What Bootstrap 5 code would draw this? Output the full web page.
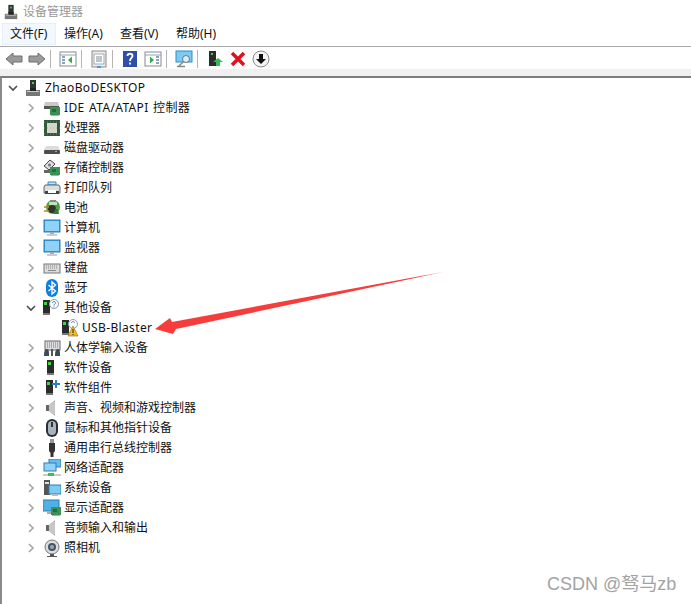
<!DOCTYPE html>
<html lang="zh-CN">
<head>
    <meta charset="UTF-8">
    <title>设备管理器</title>
    <link rel="stylesheet" href="https://cdn.jsdelivr.net/npm/bootstrap@5.3.3/dist/css/bootstrap.min.css">
    <style>
        html, body { height: 100%; overflow: hidden; }
        body { font-family: "Noto Sans", "Noto Sans CJK SC", sans-serif; font-size: 12px; line-height: 20px; color: #111; background: #fff; position: relative; }
        .title-bar { height: 23px; flex: none; padding-left: 3px; gap: 4px; color: #999; }
        .title-bar svg { width: 16px; height: 16px; }
        .menu-bar { height: 23px; flex: none; padding-left: 2px; }
        .menu-item { width: 56px; height: 22px; padding-left: 7px; line-height: 20px; border: 1px solid transparent; }
        .menu-item.hot { width: 54px; background: #f2f8fe; border-color: #e3effa; }
        .tool-bar { height: 23px; flex: none; padding-left: 2px; padding-top: 1px; border-top: 1px solid #a9a9a9; }
        .tool-btn { width: 23px; height: 22px; }
        .tool-btn svg { width: 18px; height: 18px; }
        .tool-sep { width: 1px; height: 18px; margin: 2px 5px 0 2px; background: #b5b5b5; }
        .band { height: 7px; flex: none; background: #f0f0f0; }
        .tree-pane { border-top: 2px solid #7d7d7d; border-left: 2px solid #8a8a8a; }
        .tree-row { height: 20px; }
        .lvl-0 { padding-left: 5px; }
        .lvl-1 { padding-left: 23px; }
        .lvl-2 { padding-left: 59px; }
        .chev { width: 12px; height: 12px; margin-right: 6px; flex: none; }
        .dev { width: 18px; height: 18px; margin-right: 3px; flex: none; }
        .lvl-0 .chev { margin-right: 5px; }
        .latin { letter-spacing: .35px; word-spacing: 1px; }
        .red-arrow { position: absolute; left: 150px; top: 265px; width: 302px; height: 75px; }
        .watermark { position: absolute; left: 547px; top: 574px; font-family: "Liberation Sans", "Noto Sans CJK SC", sans-serif; font-size: 18px; color: #a3a3a3; }
    </style>
</head>
<body>

    <svg width="0" height="0" class="position-absolute">
        <defs>
            <g id="tower"><rect x="3" y="1" width="7" height="15" fill="#2b2b2b"/><rect x="4" y="3" width="3" height="3" fill="#3fd34a"/><rect x="3" y="14" width="7" height="2" fill="#777"/></g>
            <symbol id="i-mgr" viewBox="0 0 18 18"><rect x="6" y="1" width="6" height="10" fill="#333"/><rect x="8" y="3" width="2" height="2" fill="#46d24f"/><path d="M2 11h14v6H2z" fill="#777"/><path d="M3 12h12v1H3z" fill="#ccc"/><rect x="6" y="9" width="6" height="3" fill="#222"/></symbol>
            <symbol id="i-ide" viewBox="0 0 18 18"><path d="M2 3h13l1 4H1z" fill="#c9c9c9"/><path d="M1 7h15v3H1z" fill="#555"/><rect x="7" y="8" width="10" height="8" fill="#3d8f55"/><rect x="9" y="10" width="4" height="3" fill="#173"/><path d="M8 16h8v1H8z" fill="#e3a92c"/></symbol>
            <symbol id="i-cpu" viewBox="0 0 18 18"><rect x="1" y="1" width="16" height="16" fill="#2f5a3c"/><rect x="4" y="4" width="10" height="10" fill="#d6d6d0"/><path d="M1 3h16M1 9h16M1 15h16" stroke="#b6a54a" stroke-width=".6" stroke-dasharray="1 2"/></symbol>
            <symbol id="i-disk" viewBox="0 0 18 18"><path d="M3 7h12l2 4H1z" fill="#dcdcdc"/><rect x="1" y="11" width="16" height="4" rx="1" fill="#4d4d4d"/><rect x="12" y="12" width="2" height="1" fill="#4de35a"/></symbol>
            <symbol id="i-store" viewBox="0 0 18 18"><path d="M7 1l5 4-6 6-5-4z" fill="#ddd" stroke="#444"/><circle cx="6.500" cy="6" r="1.500" fill="#777"/><path d="M1 11h8v3H1z" fill="#666"/><rect x="7" y="8" width="10" height="8" fill="#3d8f55"/><rect x="9" y="10" width="4" height="3" fill="#173"/><path d="M8 16h8v1H8z" fill="#e3a92c"/></symbol>
            <symbol id="i-print" viewBox="0 0 18 18"><path d="M5 3h8v3H5z" fill="#bfe2f5" stroke="#2a8fc0"/><path d="M2 6h14l1 2v6H1V8z" fill="#dedede" stroke="#666"/><path d="M2 12h14v3H2z" fill="#444"/><path d="M5 11h8v3H5z" fill="#fff"/></symbol>
            <symbol id="i-batt" viewBox="0 0 18 18"><circle cx="10" cy="8" r="7" fill="#4f9e4b"/><path d="M6 3h8v3H6z" fill="#bfe3b2"/><path d="M7 1h6v2H7z" fill="#888"/><circle cx="9" cy="10" r="4" fill="#333"/><path d="M1 8h5M1 12h5" stroke="#b08a2a" stroke-width="1.500"/><path d="M12 10h3l1 5h-5z" fill="#2f7f33"/></symbol>
            <symbol id="i-pc" viewBox="0 0 18 18"><rect x="1" y="1" width="16" height="12" fill="#36a0de" stroke="#2a7fb8"/><rect x="2" y="2" width="14" height="10" fill="#8fd2f6"/><path d="M7 13h4v2H7z" fill="#aaa"/><path d="M4 15h10v2H4z" fill="#ccc"/></symbol>
            <symbol id="i-kbd" viewBox="0 0 18 18"><rect x="1" y="5" width="16" height="9" fill="#dcdcdc" stroke="#777"/><path d="M3 7h12M3 9h12" stroke="#888" stroke-dasharray="1 1"/><path d="M5 11.500h8" stroke="#888"/></symbol>
            <symbol id="i-bt" viewBox="0 0 18 18"><rect x="3" y="0" width="12" height="18" rx="6" fill="#0f7fdc"/><path d="M5.500 6l7 6-3.500 3V3l3.500 3-7 6" fill="none" stroke="#fff" stroke-width="1.300"/></symbol>
            <symbol id="i-other" viewBox="0 0 18 18"><use href="#tower" x="-3"/><circle cx="11" cy="5" r="4.500" fill="#fff" stroke="#8a9fb5"/><path d="M9.500 4c0-2 3-2 3 0 0 1-1.500 1-1.500 2.500M11 7.500v1" fill="none" stroke="#4a77a8"/></symbol>
            <symbol id="i-warn" viewBox="0 0 18 18"><use href="#tower" x="-2"/><circle cx="12" cy="5" r="4.500" fill="#fff" stroke="#8a9fb5"/><path d="M10.500 4c0-2 3-2 3 0" fill="none" stroke="#4a77a8"/><path d="M12 7l5 10H7z" fill="#f5bd20" stroke="#8a6a10" stroke-width=".6"/><path d="M12 10v4M12 15v1" stroke="#222"/></symbol>
            <symbol id="i-hid" viewBox="0 0 18 18"><rect x="2" y="2" width="15" height="9" fill="#ddd" stroke="#666"/><path d="M4 4h11M4 6h11M4 8h11" stroke="#777" stroke-dasharray="1 1"/><path d="M1 17c0-5 1-7 3-7s2 3 2 7z" fill="#3b4a5a"/><path d="M12 17c0-5 1-7 3-7s2 3 2 7z" fill="#3b4a5a"/><rect x="8" y="10" width="2" height="7" fill="#555"/></symbol>
            <symbol id="i-soft" viewBox="0 0 18 18"><use href="#tower" x="1"/></symbol>
            <symbol id="i-comp" viewBox="0 0 18 18"><use href="#tower" x="0"/><path d="M12 1h2v3h3v2h-3v3h-2V6H9V4h3z" fill="#2f7fc8"/></symbol>
            <symbol id="i-snd" viewBox="0 0 18 18"><path d="M3 6h3l6-5v16l-6-5H3z" fill="#9a9a9a"/><path d="M6 6l6-5v16l-6-5z" fill="#c7c7c7"/><path d="M3 6h3v6H3z" fill="#666"/></symbol>
            <symbol id="i-mouse" viewBox="0 0 18 18"><rect x="3" y="0" width="12" height="18" rx="6" fill="#26303a"/><rect x="5" y="2" width="8" height="14" rx="4" fill="#a9b4be"/><rect x="8" y="3" width="2" height="5" fill="#333"/></symbol>
            <symbol id="i-usb" viewBox="0 0 18 18"><rect x="7" y="0" width="4" height="4" fill="#999"/><path d="M6 4h6v8l-1.500 2v4h-3v-4L6 12z" fill="#333"/></symbol>
            <symbol id="i-net" viewBox="0 0 18 18"><rect x="6" y="0" width="12" height="8" fill="#66bcec" stroke="#2a7fb8"/><rect x="1" y="4" width="12" height="8" fill="#8fd2f6" stroke="#2a7fb8"/><path d="M0 15h18v2H0z" fill="#ccc"/><path d="M5 14h6v3H5z" fill="#3fbf4a"/></symbol>
            <symbol id="i-sys" viewBox="0 0 18 18"><rect x="1" y="1" width="6" height="15" fill="#555"/><rect x="2" y="3" width="4" height="2" fill="#cfe4f3"/><rect x="6" y="6" width="12" height="9" fill="#7ccbf3" stroke="#2a7fb8"/><path d="M9 15h6v2H9z" fill="#bbb"/></symbol>
            <symbol id="i-disp" viewBox="0 0 18 18"><rect x="0" y="1" width="16" height="11" fill="#4fb0e6" stroke="#2a7fb8"/><path d="M4 12h6v3H4z" fill="#aaa"/><rect x="8" y="8" width="10" height="8" fill="#3d8f55"/><rect x="10" y="10" width="4" height="3" fill="#173"/><path d="M9 16h8v1H9z" fill="#e3a92c"/></symbol>
            <symbol id="i-cam" viewBox="0 0 18 18"><circle cx="9" cy="8" r="7" fill="#ddd" stroke="#777"/><circle cx="9" cy="8" r="4" fill="#456"/><circle cx="9" cy="8" r="2" fill="#9ab"/><path d="M7 15h4v2H7zM4 17h10v1H4z" fill="#555"/></symbol>
            <symbol id="c-right" viewBox="0 0 12 12"><path d="M4 2l4 4-4 4" fill="none" stroke="#a6a6a6" stroke-width="1.600"/></symbol>
            <symbol id="c-down" viewBox="0 0 12 12"><path d="M2 4l4 4 4-4" fill="none" stroke="#4d4d4d" stroke-width="1.600"/></symbol>
        </defs>
    </svg>

    <div class="d-flex flex-column h-100">
        <div class="title-bar d-flex align-items-center">
            <svg><use href="#i-mgr"/></svg>
            <span>设备管理器</span>
        </div>

        <div class="menu-bar d-flex">
            <div class="menu-item hot">文件(F)</div>
            <div class="menu-item">操作(A)</div>
            <div class="menu-item">查看(V)</div>
            <div class="menu-item">帮助(H)</div>
        </div>

        <div class="tool-bar d-flex align-items-start">
            <div class="tool-btn d-flex align-items-center justify-content-center"><svg viewBox="0 0 18 18"><path d="M1 9l7-6v3h9v6H8v3z" fill="#9a9a9a" stroke="#6f6f6f"/></svg></div>
            <div class="tool-btn d-flex align-items-center justify-content-center"><svg viewBox="0 0 18 18"><path d="M17 9l-7-6v3H1v6h9v3z" fill="#9a9a9a" stroke="#6f6f6f"/></svg></div>
            <div class="tool-sep"></div>
            <div class="tool-btn d-flex align-items-center justify-content-center"><svg viewBox="0 0 18 18"><rect x="1" y="2" width="16" height="14" fill="#fff" stroke="#8a8a8a"/><path d="M1 5h16" stroke="#8ab"/><path d="M3 7h3M3 10h3M3 13h3" stroke="#68a" stroke-width="1.500"/><path d="M13 6.500v7L9 10z" fill="#2fae4f"/></svg></div>
            <div class="tool-sep"></div>
            <div class="tool-btn d-flex align-items-center justify-content-center"><svg viewBox="0 0 18 18"><rect x="2" y="1" width="14" height="16" fill="#eee" stroke="#8a8a8a"/><rect x="4" y="4" width="10" height="10" fill="#fff" stroke="#aaa"/><path d="M6 7h6M6 9h6M6 11h6" stroke="#7a8fa5"/><path d="M7 17h4" stroke="#3aa0e0" stroke-width="2"/></svg></div>
            <div class="tool-sep"></div>
            <div class="tool-btn d-flex align-items-center justify-content-center"><svg viewBox="0 0 18 18"><rect x="2" y="1" width="14" height="16" fill="#2d4fa8"/><path d="M6.500 6c0-3 5-3 5 0 0 2-2.500 2-2.500 5M9 12.500v2" fill="none" stroke="#fff" stroke-width="1.800"/></svg></div>
            <div class="tool-btn d-flex align-items-center justify-content-center"><svg viewBox="0 0 18 18"><rect x="1" y="2" width="16" height="14" fill="#fff" stroke="#8a8a8a"/><path d="M1 5h16" stroke="#8ab"/><path d="M12 7h3M12 10h3M12 13h3" stroke="#68a" stroke-width="1.500"/><path d="M6 6.500v7L10 10z" fill="#2fae4f"/></svg></div>
            <div class="tool-sep"></div>
            <div class="tool-btn d-flex align-items-center justify-content-center"><svg viewBox="0 0 18 18"><rect x="1" y="1" width="16" height="11" fill="#7ccbf3" stroke="#2a8fd0"/><circle cx="11" cy="9" r="3.500" fill="#d8eefa" stroke="#777"/><path d="M8.500 11.500L4 16M2 16.500h8" stroke="#888" stroke-width="1.500"/></svg></div>
            <div class="tool-sep"></div>
            <div class="tool-btn d-flex align-items-center justify-content-center"><svg viewBox="0 0 18 18"><rect x="3" y="1" width="7" height="15" fill="#2b2b2b"/><rect x="5" y="3" width="2" height="2" fill="#46d24f"/><path d="M12 8l5 4h-3v4h-4v-4H7z" fill="#2fbf4f"/></svg></div>
            <div class="tool-btn d-flex align-items-center justify-content-center"><svg viewBox="0 0 18 18"><path d="M3 3l12 12M15 3L3 15" stroke="#e0101c" stroke-width="3.500"/></svg></div>
            <div class="tool-btn d-flex align-items-center justify-content-center"><svg viewBox="0 0 18 18"><circle cx="9" cy="9" r="8" fill="#f4f4f4" stroke="#888"/><path d="M7 4h4v5h3l-5 5-5-5h3z" fill="#111"/></svg></div>
        </div>

        <div class="band"></div>

        <div class="tree-pane flex-grow-1">
            <div class="tree-row lvl-0 d-flex align-items-center"><svg class="chev"><use href="#c-down"/></svg><svg class="dev"><use href="#i-mgr"/></svg><span class="latin">ZhaoBoDESKTOP</span></div>
            <div class="tree-row lvl-1 d-flex align-items-center"><svg class="chev"><use href="#c-right"/></svg><svg class="dev"><use href="#i-ide"/></svg><span class="latin">IDE ATA/ATAPI 控制器</span></div>
            <div class="tree-row lvl-1 d-flex align-items-center"><svg class="chev"><use href="#c-right"/></svg><svg class="dev"><use href="#i-cpu"/></svg>处理器</div>
            <div class="tree-row lvl-1 d-flex align-items-center"><svg class="chev"><use href="#c-right"/></svg><svg class="dev"><use href="#i-disk"/></svg>磁盘驱动器</div>
            <div class="tree-row lvl-1 d-flex align-items-center"><svg class="chev"><use href="#c-right"/></svg><svg class="dev"><use href="#i-store"/></svg>存储控制器</div>
            <div class="tree-row lvl-1 d-flex align-items-center"><svg class="chev"><use href="#c-right"/></svg><svg class="dev"><use href="#i-print"/></svg>打印队列</div>
            <div class="tree-row lvl-1 d-flex align-items-center"><svg class="chev"><use href="#c-right"/></svg><svg class="dev"><use href="#i-batt"/></svg>电池</div>
            <div class="tree-row lvl-1 d-flex align-items-center"><svg class="chev"><use href="#c-right"/></svg><svg class="dev"><use href="#i-pc"/></svg>计算机</div>
            <div class="tree-row lvl-1 d-flex align-items-center"><svg class="chev"><use href="#c-right"/></svg><svg class="dev"><use href="#i-pc"/></svg>监视器</div>
            <div class="tree-row lvl-1 d-flex align-items-center"><svg class="chev"><use href="#c-right"/></svg><svg class="dev"><use href="#i-kbd"/></svg>键盘</div>
            <div class="tree-row lvl-1 d-flex align-items-center"><svg class="chev"><use href="#c-right"/></svg><svg class="dev"><use href="#i-bt"/></svg>蓝牙</div>
            <div class="tree-row lvl-1 d-flex align-items-center"><svg class="chev"><use href="#c-down"/></svg><svg class="dev"><use href="#i-other"/></svg>其他设备</div>
            <div class="tree-row lvl-2 d-flex align-items-center"><svg class="dev"><use href="#i-warn"/></svg><span class="latin">USB-Blaster</span></div>
            <div class="tree-row lvl-1 d-flex align-items-center"><svg class="chev"><use href="#c-right"/></svg><svg class="dev"><use href="#i-hid"/></svg>人体学输入设备</div>
            <div class="tree-row lvl-1 d-flex align-items-center"><svg class="chev"><use href="#c-right"/></svg><svg class="dev"><use href="#i-soft"/></svg>软件设备</div>
            <div class="tree-row lvl-1 d-flex align-items-center"><svg class="chev"><use href="#c-right"/></svg><svg class="dev"><use href="#i-comp"/></svg>软件组件</div>
            <div class="tree-row lvl-1 d-flex align-items-center"><svg class="chev"><use href="#c-right"/></svg><svg class="dev"><use href="#i-snd"/></svg>声音、视频和游戏控制器</div>
            <div class="tree-row lvl-1 d-flex align-items-center"><svg class="chev"><use href="#c-right"/></svg><svg class="dev"><use href="#i-mouse"/></svg>鼠标和其他指针设备</div>
            <div class="tree-row lvl-1 d-flex align-items-center"><svg class="chev"><use href="#c-right"/></svg><svg class="dev"><use href="#i-usb"/></svg>通用串行总线控制器</div>
            <div class="tree-row lvl-1 d-flex align-items-center"><svg class="chev"><use href="#c-right"/></svg><svg class="dev"><use href="#i-net"/></svg>网络适配器</div>
            <div class="tree-row lvl-1 d-flex align-items-center"><svg class="chev"><use href="#c-right"/></svg><svg class="dev"><use href="#i-sys"/></svg>系统设备</div>
            <div class="tree-row lvl-1 d-flex align-items-center"><svg class="chev"><use href="#c-right"/></svg><svg class="dev"><use href="#i-disp"/></svg>显示适配器</div>
            <div class="tree-row lvl-1 d-flex align-items-center"><svg class="chev"><use href="#c-right"/></svg><svg class="dev"><use href="#i-snd"/></svg>音频输入和输出</div>
            <div class="tree-row lvl-1 d-flex align-items-center"><svg class="chev"><use href="#c-right"/></svg><svg class="dev"><use href="#i-cam"/></svg>照相机</div>
        </div>
    </div>

    <svg class="red-arrow" viewBox="150 265 302 75">
        <defs>
            <linearGradient id="fade" x1="0" x2="1" y1="0" y2="0">
                <stop offset="0.9" stop-color="#f73c3c"/>
                <stop offset="1" stop-color="#f73c3c" stop-opacity="0.2"/>
            </linearGradient>
        </defs>
        <path d="M155 329L170 318L172 322L448 271L176 329L173 334Z" fill="url(#fade)"/>
    </svg>
    <div class="watermark">CSDN @驽马zb</div>

</body>
</html>
